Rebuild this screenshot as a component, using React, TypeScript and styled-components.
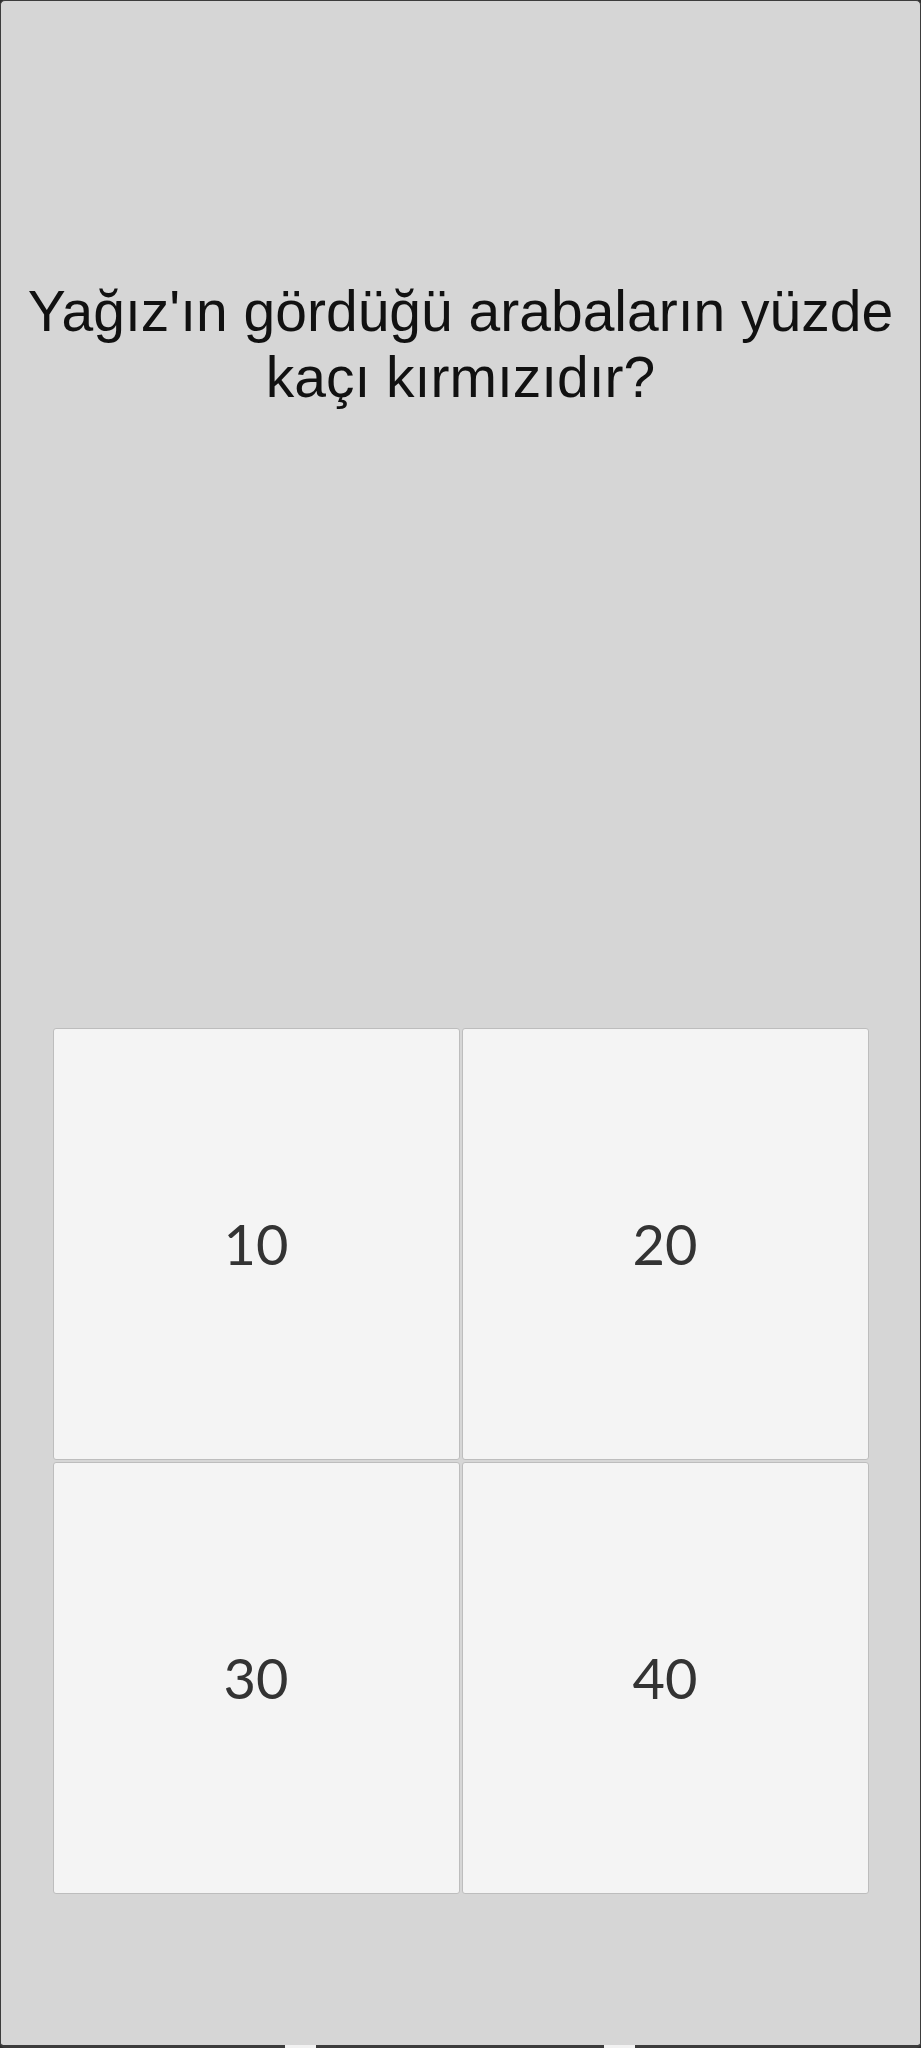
import React from 'react';
import styled, { createGlobalStyle } from 'styled-components';

const GlobalStyle = createGlobalStyle`
  html, body {
    margin: 0;
    padding: 0;
    background: #2e2e2e;
  }
  * {
    box-sizing: border-box;
  }
`;

const Frame = styled.div`
  position: relative;
  width: 921px;
  height: 2048px;
  background: #d6d6d6;
  border: 1px solid #3c3c3c;
  border-bottom-width: 3px;
  border-radius: 5px;
  display: flex;
  flex-direction: column;
  align-items: center;
  padding-top: 277px;
  font-family: "Liberation Sans", Arial, sans-serif;
`;

const Question = styled.h1`
  margin: 0;
  width: 900px;
  font-size: 57px;
  font-weight: 400;
  line-height: 66px;
  color: #111;
  text-align: center;
`;

const Answers = styled.div`
  margin-top: 618px;
  display: grid;
  grid-template-columns: 407px 407px;
  grid-auto-rows: 432px;
  gap: 2px;
`;

const AnswerCard = styled.button`
  display: flex;
  align-items: center;
  justify-content: center;
  background: #f4f4f4;
  border: 1px solid #bdbdbd;
  border-radius: 3px;
  font-family: Lato, "Liberation Sans", sans-serif;
  font-size: 56px;
  font-weight: 400;
  color: #333;
  padding: 0 0 2px;
  cursor: pointer;
`;

const BottomTabs = styled.div`
  position: absolute;
  left: 284px;
  bottom: -3px;
  display: flex;
  gap: 288px;
`;

const Tab = styled.span`
  width: 31px;
  height: 3px;
  background: #f2f2f2;
`;

const answers = ['10', '20', '30', '40'];

function App() {
  return (
    <>
      <GlobalStyle />
      <Frame>
        <Question>
          Yağız'ın gördüğü arabaların yüzde
          <br />
          kaçı kırmızıdır?
        </Question>
        <Answers>
          {answers.map(a => (
            <AnswerCard key={a}>{a}</AnswerCard>
          ))}
        </Answers>
        <BottomTabs>
          <Tab />
          <Tab />
        </BottomTabs>
      </Frame>
    </>
  );
}

export default App;
